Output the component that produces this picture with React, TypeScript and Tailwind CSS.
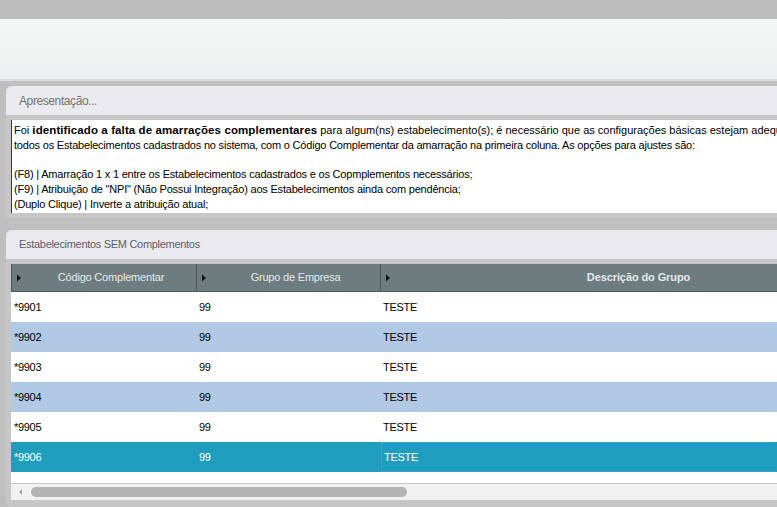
const ROWS = [
  { code: "*9901", grupo: "99", desc: "TESTE" },
  { code: "*9902", grupo: "99", desc: "TESTE" },
  { code: "*9903", grupo: "99", desc: "TESTE" },
  { code: "*9904", grupo: "99", desc: "TESTE" },
  { code: "*9905", grupo: "99", desc: "TESTE" },
  { code: "*9906", grupo: "99", desc: "TESTE" },
];

const SELECTED = 5;

function Arrow() {
  return (
    <svg width="14" height="8" viewBox="0 0 14 8" className="shrink-0">
      <polygon points="5,0.5 9,4 5,7.5" fill="#111" />
    </svg>
  );
}

function HeaderCell({ label, width, bold }: { label: string; width: string; bold?: boolean }) {
  return (
    <div className={`${width} h-full flex items-center border-r border-[#4d5759] shrink-0`}>
      <Arrow />
      <span className={`flex-1 text-center text-[#e5e8e8] ${bold ? "font-bold tracking-[-0.1px]" : "tracking-[-0.2px]"}`}>
        {label}
      </span>
    </div>
  );
}

function PanelTitle({ children, className }: { children: string; className: string }) {
  return <div className={`h-[29px] bg-[#ebeaee] pl-[13px] flex items-center ${className}`}>{children}</div>;
}

export default function App() {
  return (
    <div className="w-[777px] h-[507px] overflow-hidden bg-[#bfbfbf] font-['Liberation_Sans',Arial,sans-serif] text-[11px]">
      <div className="h-[19px] bg-[#bdbdbd]" />
      <div className="h-[62px] bg-gradient-to-b from-[#f5f7f6] to-[#edeeef] border-b-2 border-[#dcdcdc]" />

      <div className="pl-[6px] pt-[5px] w-[900px]">
        <section className="rounded-tl-[6px] bg-[#c6c6c6] overflow-hidden">
          <PanelTitle className="text-[12px] tracking-[-0.4px] text-[#747474]">Apresentação...</PanelTitle>
          <div className="pl-[5px] py-[5px]">
            <div className="h-[93px] bg-white border-l border-[#3a3a3a] pl-[2px] pt-[3px] leading-[14.8px] text-[11px] tracking-[-0.2px] text-black whitespace-nowrap overflow-hidden">
              <div className="tracking-[0px]">
                Foi <b className="text-[11.5px] tracking-[0.1px]">identificado a falta de amarrações complementares</b> para algum(ns) estabelecimento(s); é necessário que as configurações básicas estejam adequadas
              </div>
              <div>
                todos os Estabelecimentos cadastrados no sistema, com o Código Complementar da amarração na primeira coluna. As opções para ajustes são:
              </div>
              <div className="h-[14.8px]" />
              <div>(F8) | Amarração 1 x 1 entre os Estabelecimentos cadastrados e os Copmplementos necessários;</div>
              <div>(F9) | Atribuição de "NPI" (Não Possui Integração) aos Estabelecimentos ainda com pendência;</div>
              <div>(Duplo Clique) | Inverte a atribuição atual;</div>
            </div>
          </div>
        </section>

        <section className="mt-[12px] rounded-tl-[6px] rounded-bl-[6px] bg-[#c6c6c6] overflow-hidden">
          <PanelTitle className="text-[11px] tracking-[-0.3px] text-[#5b6167]">Estabelecimentos SEM Complementos</PanelTitle>
          <div className="pl-[5px] pt-[5px] pb-[6px]">
            <div className="bg-white">
              <div className="h-[28px] flex bg-[#6d7c7f] border-l border-b border-[#4d5759]">
                <HeaderCell label="Código Complementar" width="w-[185px]" />
                <HeaderCell label="Grupo de Empresa" width="w-[184px]" />
                <HeaderCell label="Descrição do Grupo" width="w-[502px]" bold />
              </div>
              {ROWS.map((r, i) => {
                const sel = i === SELECTED;
                const bg = sel ? "bg-[#1e9dbd] text-white" : i % 2 === 1 ? "bg-[#b1c9e5] text-black" : "bg-white text-black";
                return (
                  <div key={r.code} className={`h-[30px] flex items-center tracking-[-0.3px] ${bg}`}>
                    <div className="w-[185px] pl-[3px]">{r.code}</div>
                    <div className="w-[185px] pl-[3px]">{r.grupo}</div>
                    <div
                      className={`flex-1 h-full flex items-center pl-[2px] ${sel ? "border border-dotted border-[#e07a4a]" : ""}`}
                    >
                      {r.desc}
                    </div>
                  </div>
                );
              })}
              <div className="h-[11px]" />
              <div className="h-[18px] border-y border-[#c8c8c8] bg-[#f1f1f1] flex items-center">
                <svg width="20" height="10" viewBox="0 0 20 10" className="shrink-0">
                  <polygon points="8,5 11,2 11,8" fill="#a6a6a6" />
                </svg>
                <div className="w-[376px] h-[10px] rounded-full bg-[#b3b3b3]" />
              </div>
            </div>
          </div>
        </section>
      </div>
    </div>
  );
}
